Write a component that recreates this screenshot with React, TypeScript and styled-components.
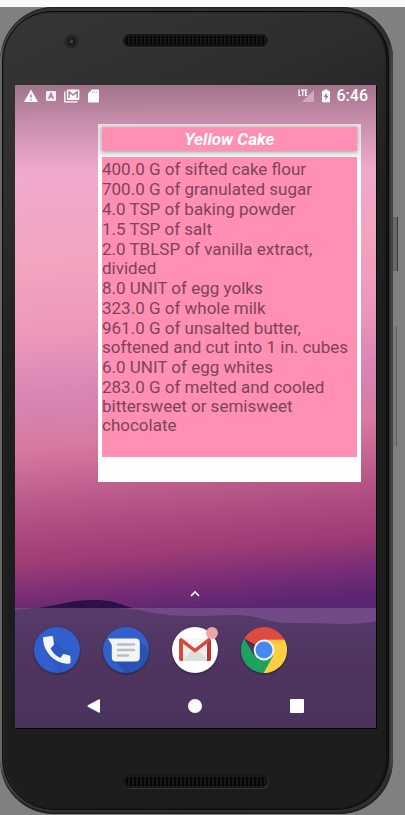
import React from 'react';
import styled, { createGlobalStyle } from 'styled-components';

const GlobalStyle = createGlobalStyle`
  * { box-sizing: border-box; }
  html, body { margin: 0; }
  body { background: #808080; font-family: Roboto, "Liberation Sans", sans-serif; }
`;

const Page = styled.div`
  display: flex;
  flex-direction: column;
  min-height: 100vh;
  padding: 0 12px 1px 0;
  border-top: 7px solid #f8fafc;
  background: #808080;
`;

const Phone = styled.div`
  position: relative;
  display: flex;
  flex: 1;
  padding: 4px;
  padding-left: 2px;
  border-radius: 54px 52px 54px 54px;
  background: linear-gradient(90deg, #858585 0, #4a4a4a 3px, #333 30px, #303030 calc(100% - 4px), #505050 100%);
  box-shadow: inset 0 1px 1px #222, inset 0 -2px 1px #222;
`;

const SideKey = styled.span<{ $top: number; $length: number; $wide?: boolean }>`
  position: absolute;
  left: 100%;
  top: ${(p) => p.$top}px;
  width: ${(p) => (p.$wide ? 5 : 4)}px;
  height: ${(p) => p.$length}px;
  border-right: 1px solid ${(p) => (p.$wide ? '#3a3a3a' : '#626262')};
  background: ${(p) => (p.$wide ? '#696969' : '#7a7a7a')};
`;

const Face = styled.div`
  display: flex;
  flex: 1;
  flex-direction: column;
  padding: 0 12px;
  border: 1px solid #090909;
  border-radius: 50px 48px 52px 52px;
  background: linear-gradient(155deg, #363637 0, #2e2e2f 18%, #212121 34%, #1d1d1d 50%);
  box-shadow: inset 1px 0 #2c2c2c, inset -2px 0 2px #111;
`;

const Forehead = styled.header`
  display: grid;
  grid-template-columns: 1fr 145px 1fr;
  height: 73px;
  padding-top: 22px;
`;

const Camera = styled.span`
  width: 15px;
  height: 15px;
  margin-left: 49px;
  border-radius: 50%;
  background: radial-gradient(circle, #55425b 0, #17141c 3px, #252526 5px, #29292a 7px);
`;

const Speaker = styled.span`
  height: 13px;
  border: 2px solid #171717;
  border-radius: 7px;
  background: radial-gradient(circle, #050505 1px, #1d1d1d 2px) 0 0 / 4px 3px;
  box-shadow: 1px 1px #353535;
`;

const Chin = styled.footer`
  display: grid;
  grid-template-columns: 1fr 145px 1fr;
  height: 81px;
  padding-top: 47px;

  ${Speaker} { grid-column: 2; }
`;

const Screen = styled.main`
  position: relative;
  display: flex;
  flex: 1;
  flex-direction: column;
  overflow: hidden;
  box-shadow: 1px 1px #000;
  background:
    linear-gradient(180deg, rgba(60, 50, 50, 0.42) 0, rgba(60, 50, 50, 0.22) 35px, transparent 85px),
    linear-gradient(
      175deg,
      #e8a3cb 0,
      #f0a9cf 14%,
      #f3a3bf 27%,
      #ee98bc 37%,
      #d884b4 47%,
      #d77aa1 54%,
      #bd5e8d 61%,
      #ab487e 67%,
      #a03c76 71%,
      #7a2d75 76%,
      #5d2672 80%,
      #4f256e 84%
    );
`;

const Scenery = styled.svg`
  position: absolute;
  left: 0;
  bottom: 0;
  width: 100%;
  height: 132px;
`;

const StatusBar = styled.div`
  position: relative;
  display: flex;
  align-items: center;
  justify-content: space-between;
  height: 22px;
  padding: 0 8px 0 9px;
  color: #fff;
`;

const StatusGroup = styled.div<{ $gap: number }>`
  display: flex;
  align-items: center;
  gap: ${(p) => p.$gap}px;
  svg { display: block; }
`;

const Clock = styled.time`
  font-size: 16px;
  font-weight: 500;
  line-height: 20px;
`;

const Card = styled.section`
  position: relative;
  width: 263px;
  margin: 17px 15px 0 auto;
  padding: 3px 4px 25px;
  background: linear-gradient(#e2e2e2 0, #f0f0f0 30px, #fff 40px);
`;

const CardTitle = styled.h1`
  margin: 0 0 6px;
  background: #ff90b4;
  box-shadow: 0 1px 4px rgba(0, 0, 0, 0.35);
  color: #fff;
  font-size: 17px;
  font-style: italic;
  font-weight: 700;
  line-height: 24px;
  text-align: center;
`;

const Ingredients = styled.ul`
  position: relative;
  display: flex;
  flex-direction: column;
  gap: 1px;
  min-height: 300px;
  margin: 0;
  padding: 3px 0 0;
  background: #ff90b4;
  color: #7d4359;
  font-size: 17px;
  line-height: 19px;
  list-style: none;
`;

const Bottom = styled.div`
  position: relative;
  margin-top: auto;
`;

const DrawerButton = styled.button`
  display: block;
  margin: 0 auto;
  padding: 4px;
  border: 0;
  background: none;
  svg { display: block; }
`;

const Dock = styled.nav`
  display: grid;
  grid-template-columns: repeat(5, 1fr);
  height: 77px;
  padding: 13px 9px 0 7px;
  justify-items: center;
  align-items: start;
  margin-top: 5px;
`;

const AppButton = styled.button`
  position: relative;
  width: 48px;
  height: 48px;
  margin-top: 6px;
  padding: 0;
  border: 0;
  background: none;
  svg { display: block; filter: drop-shadow(0 1px 1px rgba(0, 0, 0, 0.4)); }
`;

const Dot = styled.span`
  position: absolute;
  top: 1px;
  right: 1px;
  width: 12px;
  height: 12px;
  border-radius: 50%;
  background: #eba7a2;
`;

const NavBar = styled.nav`
  display: grid;
  grid-template-columns: repeat(3, 1fr);
  height: 44px;
  padding: 0 28px;
`;

const NavButton = styled.button`
  display: grid;
  place-items: center;
  padding: 0;
  border: 0;
  background: none;
`;

const ingredients = [
  '400.0 G of sifted cake flour',
  '700.0 G of granulated sugar',
  '4.0 TSP of baking powder',
  '1.5 TSP of salt',
  '2.0 TBLSP of vanilla extract, divided',
  '8.0 UNIT of egg yolks',
  '323.0 G of whole milk',
  '961.0 G of unsalted butter, softened and cut into 1 in. cubes',
  '6.0 UNIT of egg whites',
  '283.0 G of melted and cooled bittersweet or semisweet chocolate',
];

const WarningIcon = () => (
  <svg width="14" height="14" viewBox="0 0 14 14" aria-hidden="true">
    <path d="M7 .5 14 13H0Z" fill="#fff" />
    <path d="M7 5.2v3.6M7 10v1.5" stroke="#a87f97" strokeWidth="1.4" />
  </svg>
);

const LetterIcon = () => (
  <svg width="10" height="12" viewBox="0 0 10 12" aria-hidden="true">
    <rect y="1" width="10" height="10" rx="1" fill="#f5edf2" />
    <path d="M2.700 8.700 5 3.200l2.300 5.500M3.500 7h3" fill="none" stroke="#94788a" strokeWidth="1.2" />
  </svg>
);

const MailStackIcon = () => (
  <svg width="16" height="14" viewBox="0 0 16 14" aria-hidden="true">
    <path d="M.8 2.5v10.300h12.700" fill="none" stroke="#fff" strokeWidth="1.3" />
    <rect x="2.8" y=".5" width="12.6" height="10.4" rx="1.2" fill="#fff" />
    <path d="M5 9V2.800l4.100 3.300 4.100-3.300V9" fill="none" stroke="#a67e95" strokeWidth="1.4" />
  </svg>
);

const SdIcon = () => (
  <svg width="11" height="14" viewBox="0 0 11 14" aria-hidden="true">
    <path d="M4 .5h6q1 0 1 1v11q0 1-1 1H1q-1 0-1-1V4.500Z" fill="#fff" />
    <path d="M4.500 2v2M6.700 2v2M8.900 2v2" stroke="#d8bfce" strokeWidth="1" />
  </svg>
);

const SignalIcon = () => (
  <svg width="17" height="14" viewBox="0 0 17 14" aria-hidden="true">
    <path d="M16 1v12H4Z" fill="#cfaabd" />
    <path d="M1 .5v6h2M3 1.200h3.600M4.800 1v5.800M9.300 1.200H7.500V6.300h1.800M7.500 3.700h1.600" fill="none" stroke="#fff" strokeWidth="1.200" />
  </svg>
);

const BatteryIcon = () => (
  <svg width="8" height="14" viewBox="0 0 8 14" aria-hidden="true">
    <path d="M2.500.5h3v1.200H7.200q.8 0 .8.800v10q0 .8-.8.800H.8q-.8 0-.8-.8v-10q0-.8.8-.8h1.700Z" fill="#fff" />
    <path d="M4.600 3.500 1.600 8h2v3.300L6.600 6.700h-2Z" fill="#a17890" />
  </svg>
);

const PhoneIcon = () => (
  <svg width="48" height="48" viewBox="0 0 48 48" aria-hidden="true">
    <defs><clipPath id="callDisc"><circle cx="24" cy="24" r="23" /></clipPath></defs>
    <circle cx="24" cy="24" r="23" fill="#315fcb" />
    <path d="M18 11 38 31v6L27 48 13 25Z" fill="#2a53b8" clipPath="url(#callDisc)" opacity=".45" />
    <path d="M11.300 11q-1.300 0-1.300 1.400C10.700 27 22 37.500 36 37.700q1.500 0 1.500-1.400v-5.500q0-1.200-1.200-1.400l-5.200-1.300q-.8-.1-1.300.5l-2.400 3.300c-4.800-2.300-7.500-5-9.800-9.700l3-2.900q.5-.5.300-1.200l-.8-6.900q-.2-1.200-1.300-1.200Z" fill="#f4f5f7" />
  </svg>
);

const MessagesIcon = () => (
  <svg width="48" height="48" viewBox="0 0 48 48" aria-hidden="true">
    <defs><clipPath id="chatDisc"><circle cx="24" cy="24" r="23" /></clipPath></defs>
    <circle cx="24" cy="24" r="23" fill="#315fcb" />
    <path d="m37 14 12 12v24H26L12 34Z" fill="#2450aa" clipPath="url(#chatDisc)" opacity=".7" />
    <path d="M6 12.500h27.500q4.300 0 4.300 4v15q0 4-4.300 4H14q-4.200 0-4.200-4V19Z" fill="#f3f4f4" />
    <path d="M16 18.500h16M16 24h16M16 29.500h10" stroke="#bdbdbf" strokeWidth="2.600" strokeLinecap="round" />
  </svg>
);

const GmailIcon = () => (
  <svg width="48" height="48" viewBox="0 0 48 48" aria-hidden="true">
    <circle cx="24" cy="24" r="23" fill="#fff" />
    <path d="M10 12h28v23H10Z" fill="#ededed" />
    <path d="m10 35 14-13 14 13Z" fill="#dfdfdf" />
    <path d="m11 12 13 11 13-11Z" fill="#f6f6f6" />
    <path d="M8 14.500q0-2.500 2.500-2.500L24 22.500 37.500 12q2.500 0 2.500 2.500V33q0 2-2 2h-2V17.500L24 26.800 12 17.500V35h-2q-2 0-2-2Z" fill="#db483b" />
    <path d="M36 17.500 40 14v19q0 2-2 2h-2Z" fill="#bf372e" />
  </svg>
);

const ChromeIcon = () => (
  <svg width="48" height="48" viewBox="0 0 48 48" aria-hidden="true">
    <path d="M24 24 4.100 12.500A23 23 0 0 1 44.700 14Z" fill="#db4b3f" />
    <path d="M4.100 12.500A23 23 0 0 0 23.500 47L34 29 24 24 14 29Z" fill="#1da261" />
    <path d="M24 13.700h20.600A23 23 0 0 1 23.500 47L33.300 29.500Z" fill="#ffcf43" />
    <path d="M24 13.700h20.600l.9 2.100L31 18Z" fill="#e9b83c" opacity=".5" />
    <circle cx="24" cy="24" r="10.400" fill="#f3f6f8" />
    <circle cx="24" cy="24" r="8.500" fill="#4788ef" />
  </svg>
);

export default function App() {
  return (
    <>
      <GlobalStyle />
      <Page>
        <Phone>
          <Face>
            <Forehead>
              <Camera />
              <Speaker />
            </Forehead>
            <Screen>
              <Scenery viewBox="0 0 361 132" preserveAspectRatio="none" aria-hidden="true">
                <defs>
                  <linearGradient id="hill" x1="0" y1="0" x2="0" y2="1">
                    <stop offset="0" stopColor="#563b6c" />
                    <stop offset=".5" stopColor="#4e345f" />
                    <stop offset="1" stopColor="#49345c" />
                  </linearGradient>
                </defs>
                <path d="M23 12C44 9 56 4 80 4c20 0 25 5 42 9H20Z" fill="#2b1049" />
                <rect y="12" width="361" height="120" fill="#734a88" />
                <path d="M0 14 20 12H105q18 1 33 5 18 3 40 3c30 0 43-3 62 1 17 4 20 6 40 6q25 0 47 1 18 0 34-3V132H0Z" fill="url(#hill)" />
              </Scenery>
              <StatusBar>
                <StatusGroup $gap={8}>
                  <WarningIcon />
                  <LetterIcon />
                  <MailStackIcon />
                  <SdIcon />
                </StatusGroup>
                <StatusGroup $gap={7}>
                  <SignalIcon />
                  <BatteryIcon />
                  <Clock>6:46</Clock>
                </StatusGroup>
              </StatusBar>
              <Card>
                <CardTitle>Yellow Cake</CardTitle>
                <Ingredients>
                  {ingredients.map((line) => <li key={line}>{line}</li>)}
                </Ingredients>
              </Card>
              <Bottom>
                <DrawerButton aria-label="All apps">
                  <svg width="11" height="8" viewBox="0 0 11 8">
                    <path d="m1 6 4-4 4 4" fill="none" stroke="#fff" strokeWidth="1.700" />
                  </svg>
                </DrawerButton>
                <Dock aria-label="Favorites">
                  <AppButton aria-label="Phone"><PhoneIcon /></AppButton>
                  <AppButton aria-label="Messages"><MessagesIcon /></AppButton>
                  <AppButton aria-label="Gmail"><GmailIcon /><Dot /></AppButton>
                  <AppButton aria-label="Chrome"><ChromeIcon /></AppButton>
                </Dock>
                <NavBar aria-label="System">
                  <NavButton aria-label="Back">
                    <svg width="14" height="14" viewBox="0 0 14 14"><path d="M13 1v12q0 1-1 .7L.8 7.700Q0 7 .8 6.300L12 .300Q13 0 13 1Z" fill="#fff" /></svg>
                  </NavButton>
                  <NavButton aria-label="Home">
                    <svg width="14" height="14" viewBox="0 0 14 14"><circle cx="7" cy="7" r="7" fill="#fff" /></svg>
                  </NavButton>
                  <NavButton aria-label="Recent apps">
                    <svg width="14" height="14" viewBox="0 0 14 14"><rect width="14" height="14" rx="1" fill="#fff" /></svg>
                  </NavButton>
                </NavBar>
              </Bottom>
            </Screen>
            <Chin>
              <Speaker />
            </Chin>
          </Face>
          <SideKey $top={210} $length={54} $wide />
          <SideKey $top={320} $length={120} />
        </Phone>
      </Page>
    </>
  );
}
